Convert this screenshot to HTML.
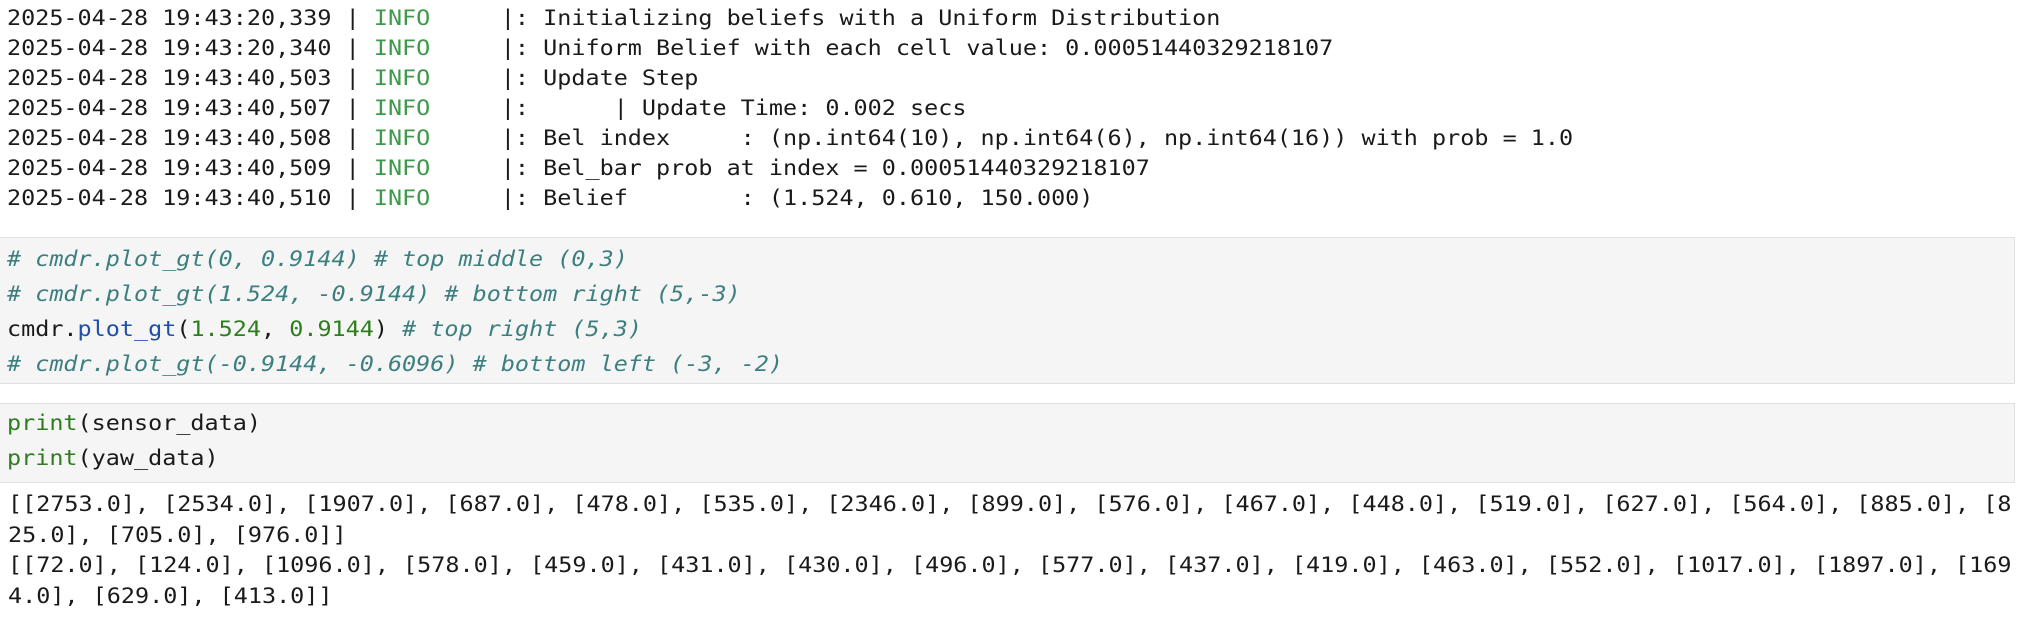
<!DOCTYPE html>
<html><head><meta charset="utf-8"><style>
body{margin:0;width:2032px;height:620px;background:#fff;overflow:hidden;font-family:"DejaVu Sans Mono","Liberation Mono",monospace;font-size:21.5px;color:#1a1a1a}
pre{margin:0;font-family:inherit;font-size:inherit;white-space:pre;transform:scaleX(1.09);transform-origin:0 0}
.log{position:absolute;left:7px;top:4px;line-height:30px}
.g{color:#3d9a4a}
.cell{position:absolute;left:-1px;width:2016px;background:#f5f5f5;border:1px solid #e0e0e0;box-sizing:border-box}
.c1{top:237px;height:147px}
.c2{top:403px;height:80px}
.code{position:absolute;left:7px;line-height:35px}
.cm{color:#3d7f7f;font-style:italic}
.kw{color:#2e7d1e}
.fn{color:#1f4fa8}
.nm{color:#2e7d1e}
.out{position:absolute;left:8px;top:490px;line-height:30.5px}
</style></head><body>
<pre class="log">2025-04-28 19:43:20,339 | <span class="g">INFO</span>     |: Initializing beliefs with a Uniform Distribution
2025-04-28 19:43:20,340 | <span class="g">INFO</span>     |: Uniform Belief with each cell value: 0.00051440329218107
2025-04-28 19:43:40,503 | <span class="g">INFO</span>     |: Update Step
2025-04-28 19:43:40,507 | <span class="g">INFO</span>     |:      | Update Time: 0.002 secs
2025-04-28 19:43:40,508 | <span class="g">INFO</span>     |: Bel index     : (np.int64(10), np.int64(6), np.int64(16)) with prob = 1.0
2025-04-28 19:43:40,509 | <span class="g">INFO</span>     |: Bel_bar prob at index = 0.00051440329218107
2025-04-28 19:43:40,510 | <span class="g">INFO</span>     |: Belief        : (1.524, 0.610, 150.000)</pre>
<div class="cell c1"></div>
<pre class="code" style="top:242px"><span class="cm"># cmdr.plot_gt(0, 0.9144) # top middle (0,3)</span>
<span class="cm"># cmdr.plot_gt(1.524, -0.9144) # bottom right (5,-3)</span>
cmdr.<span class="fn">plot_gt</span>(<span class="nm">1.524</span>, <span class="nm">0.9144</span>) <span class="cm"># top right (5,3)</span>
<span class="cm"># cmdr.plot_gt(-0.9144, -0.6096) # bottom left (-3, -2)</span></pre>
<div class="cell c2"></div>
<pre class="code" style="top:406px"><span class="kw">print</span>(sensor_data)
<span class="kw">print</span>(yaw_data)</pre>
<pre class="out">[[2753.0], [2534.0], [1907.0], [687.0], [478.0], [535.0], [2346.0], [899.0], [576.0], [467.0], [448.0], [519.0], [627.0], [564.0], [885.0], [8
25.0], [705.0], [976.0]]
[[72.0], [124.0], [1096.0], [578.0], [459.0], [431.0], [430.0], [496.0], [577.0], [437.0], [419.0], [463.0], [552.0], [1017.0], [1897.0], [169
4.0], [629.0], [413.0]]</pre>
</body></html>
